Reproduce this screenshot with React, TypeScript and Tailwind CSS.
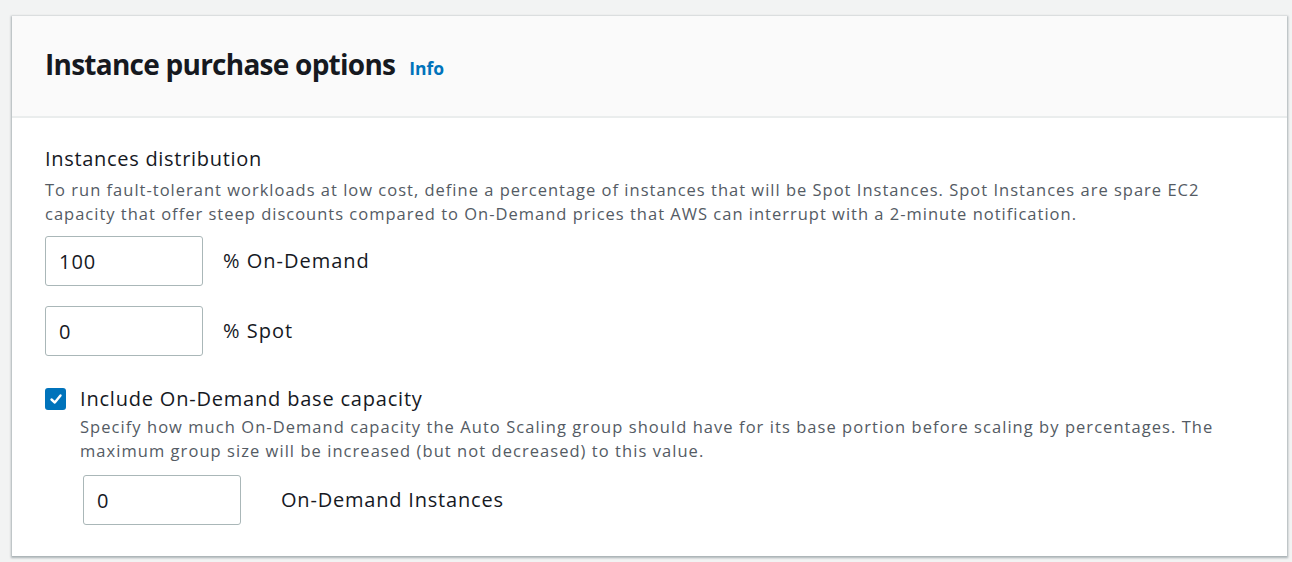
import React, { useState } from "react";

const font = { fontFamily: '"Open Sans", "Noto Sans", Arial, sans-serif' };

function NumberField({ value, onChange }: { value: string; onChange: (v: string) => void }) {
  return (
    <input
      type="text"
      value={value}
      onChange={(e) => onChange(e.target.value)}
      className="w-[158px] h-[50px] rounded-[3px] border border-[#aab7b8] bg-white px-[13px] text-[20px] tracking-[1px] text-[#16191f] outline-none"
    />
  );
}

export default function App() {
  const [onDemand, setOnDemand] = useState("100");
  const [spot, setSpot] = useState("0");
  const [base, setBase] = useState("0");
  const [includeBase, setIncludeBase] = useState(true);

  return (
    <div className="min-h-screen bg-[#f2f3f3] pt-4 pl-3 pr-[5px]" style={font}>
      <div className="bg-white shadow-[0_1px_2px_1px_rgba(0,28,36,0.3)]">
        {/* Header */}
        <div className="h-[102px] bg-[#fafafa] border-b-2 border-[#eaeded] flex items-center pb-1 px-[33px]">
          <div className="flex items-baseline">
            <h2 className="text-[28px] font-bold text-[#16191f] tracking-[-0.75px]">Instance purchase options</h2>
            <a className="ml-[14px] text-[17.5px] font-bold text-[#0073bb]">Info</a>
          </div>
        </div>

        {/* Body */}
        <div className="px-[33px] pt-[27px] pb-[31px]">
          <div className="text-[20px] tracking-[0.7px] text-[#16191f] leading-[28px]">Instances distribution</div>
          <p className="mt-[5px] text-[16.5px] tracking-[1px] text-[#545b64] leading-[24px] max-w-[1180px]">
            To run fault-tolerant workloads at low cost, define a percentage of instances that will be Spot Instances. Spot Instances are spare EC2 capacity that offer steep discounts compared to On-Demand prices that AWS can interrupt with a 2-minute notification.
          </p>

          <div className="mt-[10px] flex items-center gap-5">
            <NumberField value={onDemand} onChange={setOnDemand} />
            <span className="text-[20px] tracking-[1px] text-[#16191f]">% On-Demand</span>
          </div>
          <div className="mt-5 flex items-center gap-5">
            <NumberField value={spot} onChange={setSpot} />
            <span className="text-[20px] tracking-[1px] text-[#16191f]">% Spot</span>
          </div>

          <div className="mt-[29px] flex items-start gap-[14px]">
            <button
              onClick={() => setIncludeBase(!includeBase)}
              className={`mt-[3px] shrink-0 w-[21px] h-[22px] rounded-[3px] flex items-center justify-center ${
                includeBase ? "bg-[#0073bb]" : "bg-white border-2 border-[#aab7b8]"
              }`}
            >
              {includeBase && (
                <svg viewBox="0 0 14 14" className="w-[14px] h-[14px]">
                  <path d="M2.5 7.5 L5.8 10.5 L11.5 3.5" fill="none" stroke="white" strokeWidth="2.4" strokeLinecap="round" strokeLinejoin="round" />
                </svg>
              )}
            </button>
            <div>
              <div className="text-[20px] tracking-[0.8px] text-[#16191f] leading-[28px]">Include On-Demand base capacity</div>
              <p className="mt-[2px] text-[16.5px] tracking-[1.05px] text-[#545b64] leading-[24px] max-w-[1150px]">
                Specify how much On-Demand capacity the Auto Scaling group should have for its base portion before scaling by percentages. The maximum group size will be increased (but not decreased) to this value.
              </p>
              <div className="mt-[12px] ml-[3px] flex items-center gap-[40px]">
                <NumberField value={base} onChange={setBase} />
                <span className="text-[20px] tracking-[0.8px] text-[#16191f]">On-Demand Instances</span>
              </div>
            </div>
          </div>
        </div>
      </div>
    </div>
  );
}
